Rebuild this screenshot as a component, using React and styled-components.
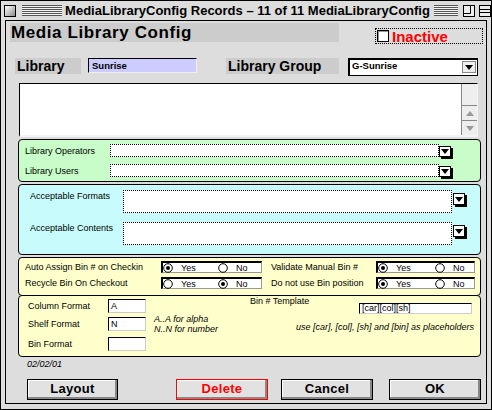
import React from 'react';
import styled, { createGlobalStyle } from 'styled-components';

const GlobalStyle = createGlobalStyle`
  html, body { margin: 0; padding: 0; background: #dddddd; }
  body { font-family: "Liberation Sans", Arial, sans-serif; color: #000; }
  * { box-sizing: border-box; }
`;

const Window = styled.div`
  width: 492px;
  height: 410px;
  border: 1px solid #000;
  background: #dddddd;
  display: flex;
  flex-direction: column;
`;

// title bar
const TitleBar = styled.div`
  height: 19px;
  flex-shrink: 0;
  display: flex;
  align-items: center;
`;
const CloseBox = styled.div`
  width: 12px;
  height: 12px;
  margin-left: 3px;
  border: 1px solid #000;
  background: linear-gradient(135deg, #ffffff 0%, #bbbbbb 60%, #888888 100%);
`;
const Stripes = styled.div`
  width: ${(p) => p.$w}px;
  height: 11px;
  margin-left: ${(p) => p.$ml}px;
  flex-shrink: 0;
  background: repeating-linear-gradient(to bottom, #555 0 1px, #f4f4f4 1px 2px);
`;
const TitleText = styled.div`
  flex: 1;
  margin: 0 4px 0 3px;
  text-align: center;
  white-space: nowrap;
  font-weight: bold;
  font-size: 13px;
  line-height: 19px;
`;
const WinBox = styled.svg`
  margin-left: ${(p) => p.$ml}px;
  flex-shrink: 0;
`;

const Body = styled.div`
  flex: 1;
  margin: 0 4px 5px 4px;
  border: 1px solid #000;
  display: flex;
  flex-direction: column;
`;

// header
const Header = styled.div`
  display: flex;
  align-items: flex-start;
  height: 21px;
  margin-top: 2px;
`;
const HeaderBand = styled.div`
  margin-left: 4px;
  width: 329px;
  height: 19px;
  background: #cccccc;
  padding-left: 1px;
  font-weight: bold;
  font-size: 17px;
  letter-spacing: 0.6px;
  line-height: 19px;
`;
const InactiveBox = styled.label`
  margin: 5px 3px 0 auto;
  width: 108px;
  height: 16px;
  border: 1px dotted #000;
  display: flex;
  align-items: center;
  padding-left: 1px;
  gap: 3px;
  color: #ff0000;
  font-weight: bold;
  font-size: 15px;
`;
const CheckBox = styled.span`
  width: 12px;
  height: 12px;
  background: #fff;
  border: 1px solid #000;
  box-shadow: inset 1px 1px 0 #999;
`;

// library row
const LibRow = styled.div`
  display: flex;
  align-items: flex-start;
  height: 18px;
  margin-top: 14px;
`;
const LabelBand = styled.div`
  margin-left: ${(p) => p.$ml}px;
  width: ${(p) => p.$w}px;
  height: 16px;
  background: #cccccc;
  padding-left: 2px;
  font-weight: bold;
  font-size: 14px;
  line-height: 16px;
  white-space: nowrap;
`;
const LibInput = styled.div`
  margin-left: 7px;
  width: 109px;
  height: 15px;
  background: #ccccff;
  border-top: 1px solid #000;
  border-left: 1px solid #000;
  border-right: 1px solid #eee;
  border-bottom: 1px solid #eee;
  padding-left: 3px;
  font-weight: bold;
  font-size: 9.5px;
  line-height: 13px;
`;
const Select = styled.div`
  margin-left: 9px;
  width: 130px;
  height: 18px;
  background: #fff;
  border: 1px solid #000;
  box-shadow: inset 1px 1px 0 #000;
  display: flex;
  align-items: center;
  padding: 0 1px 0 3px;
  font-weight: bold;
  font-size: 9.5px;
`;
const SelectText = styled.span`
  flex: 1;
  margin-top: -4px;
`;
const SelectArrow = styled.span`
  width: 14px;
  height: 12px;
  border: 1px solid #888;
  background: #eeeeee;
  display: flex;
  align-items: center;
  justify-content: center;
`;

// notes box
const NotesBox = styled.div`
  margin: 7px 0 0 13px;
  width: 459px;
  height: 54px;
  background: #fff;
  border-top: 1px solid #000;
  border-left: 1px solid #000;
  border-right: 1px solid #f4f4f4;
  border-bottom: 2px solid #f4f4f4;
  display: flex;
  justify-content: flex-end;
`;
const ScrollBar = styled.div`
  width: 16px;
  background: #eeeeee;
  border-left: 1px solid #888;
  display: flex;
  flex-direction: column;
`;
const ScrollTrack = styled.div`
  flex: 1;
`;
const ScrollArrow = styled.div`
  height: 15px;
  border-top: 1px solid #888;
  display: flex;
  align-items: center;
  justify-content: center;
`;

// coloured panels
const Panel = styled.div`
  margin: ${(p) => p.$mt}px 0 0 12px;
  width: 463px;
  height: ${(p) => p.$h}px;
  background: ${(p) => p.$bg};
  border: 1px solid #000;
  border-radius: 4px;
  padding: ${(p) => p.$pad};
  display: flex;
  flex-direction: ${(p) => p.$dir || 'column'};
`;
const FieldRow = styled.div`
  display: flex;
  align-items: ${(p) => p.$align || 'center'};
  height: ${(p) => p.$h}px;
  margin-top: ${(p) => p.$mt || 0}px;
`;
const Label = styled.span`
  width: ${(p) => p.$w}px;
  flex-shrink: 0;
  font-size: 9px;
  line-height: ${(p) => p.$lh || 10}px;
  white-space: nowrap;
  margin-left: ${(p) => p.$ml || 0}px;
`;
const DottedField = styled.div`
  width: 329px;
  height: ${(p) => p.$h}px;
  background: #fff;
  border: 1px dotted #000;
  flex-shrink: 0;
`;
const DropBtn = styled.span`
  width: 12px;
  height: ${(p) => p.$h}px;
  margin: ${(p) => p.$mt || 0}px 0 0 ${(p) => p.$ml || 0}px;
  background: #fff;
  border: 1px solid #000;
  box-shadow: 2px 2px 0 #000;
  display: flex;
  align-items: center;
  justify-content: center;
`;

// radios
const RadioBox = styled.div`
  width: ${(p) => p.$w}px;
  height: 12px;
  background: #fff;
  border-top: 2px solid #000;
  border-left: 2px solid #000;
  border-right: 1px solid #999;
  border-bottom: 1px solid #999;
  display: flex;
  align-items: center;
`;
const RadioOpt = styled.span`
  width: ${(p) => p.$w || 'auto'}px;
  display: flex;
  align-items: center;
  gap: 8px;
  font-size: 9px;
`;

// yellow lower panel
const LeftCol = styled.div`
  width: 231px;
  padding: 3px 0 0 9px;
  display: flex;
  flex-direction: column;
`;
const RightCol = styled.div`
  flex: 1;
  padding-right: 6px;
  display: flex;
  flex-direction: column;
`;
const SmallInput = styled.div`
  width: ${(p) => p.$w}px;
  height: ${(p) => p.$h}px;
  margin-top: ${(p) => p.$mt || 0}px;
  background: #fff;
  border-top: 1px solid #000;
  border-left: 1px solid #000;
  border-right: 1px solid #ccc;
  border-bottom: 1px solid #ccc;
  padding-left: 2px;
  font-size: 9px;
  line-height: ${(p) => p.$h - 2}px;
  flex-shrink: 0;
`;
const Hint = styled.div`
  margin-left: 8px;
  font-size: 9px;
  font-style: italic;
  line-height: 10px;
`;
const Placeholder = styled.div`
  margin-top: 8px;
  text-align: right;
  font-size: 9px;
  font-style: italic;
  line-height: 10px;
`;

const DateText = styled.div`
  margin: 2px 0 0 21px;
  font-size: 9px;
  font-style: italic;
  line-height: 10px;
`;

const ButtonRow = styled.div`
  display: flex;
  margin-top: 10px;
  height: 21px;
`;
const Button = styled.button`
  margin-left: ${(p) => p.$ml}px;
  width: ${(p) => p.$w}px;
  height: 21px;
  padding: 0 0 2px 0;
  background: #e2e2e2;
  border: 1px solid ${(p) => (p.$danger ? '#ff0000' : '#000')};
  box-shadow: inset -2px -2px 0 #888, inset 1px 1px 0 #fff;
  color: ${(p) => (p.$danger ? '#ff0000' : '#000')};
  font-family: "Liberation Sans", Arial, sans-serif;
  font-weight: bold;
  font-size: 13px;
  letter-spacing: 0.3px;
  border-radius: 0;
`;

const Tri = ({ fill = '#000', up }) => (
  <svg width="8" height="5" viewBox="0 0 8 5">
    <path d={up ? 'M0 5H8L4 0Z' : 'M0 0H8L4 5Z'} fill={fill} />
  </svg>
);

const Radio = ({ on }) => (
  <svg width="10" height="10" viewBox="0 0 10 10">
    <circle cx="5" cy="5" r="4.3" fill="#fff" stroke="#000" strokeWidth="1" />
    {on && <circle cx="5" cy="5" r="2" fill="#000" />}
  </svg>
);

const YesNo = ({ box, yesW, yes }) => (
  <RadioBox $w={box}>
    <RadioOpt $w={yesW}>
      <Radio on={yes} />
      Yes
    </RadioOpt>
    <RadioOpt>
      <Radio on={!yes} />
      No
    </RadioOpt>
  </RadioBox>
);

export default function App() {
  return (
    <>
      <GlobalStyle />
      <Window>
        <TitleBar>
          <CloseBox />
          <Stripes $w={40} $ml={6} />
          <TitleText>MediaLibraryConfig Records – 11 of 11 MediaLibraryConfig</TitleText>
          <Stripes $w={24} $ml={0} />
          <WinBox $ml={5} width="12" height="12" viewBox="0 0 12 12">
            <rect x="0.5" y="0.5" width="11" height="11" fill="#eee" stroke="#000" />
            <path d="M0.5 8.5H7.5V0.5" fill="none" stroke="#000" />
          </WinBox>
          <WinBox $ml={4} width="12" height="12" viewBox="0 0 12 12">
            <rect x="0.5" y="0.5" width="11" height="11" fill="#eee" stroke="#000" />
            <path d="M0.5 4.5H11.5M0.5 7.5H11.5" stroke="#000" />
          </WinBox>
        </TitleBar>

        <Body>
          <Header>
            <HeaderBand>Media Library Config</HeaderBand>
            <InactiveBox>
              <CheckBox />
              Inactive
            </InactiveBox>
          </Header>

          <LibRow>
            <LabelBand $ml={9} $w={66}>Library</LabelBand>
            <LibInput>Sunrise</LibInput>
            <LabelBand $ml={29} $w={113}>Library Group</LabelBand>
            <Select>
              <SelectText>G-Sunrise</SelectText>
              <SelectArrow>
                <Tri />
              </SelectArrow>
            </Select>
          </LibRow>

          <NotesBox>
            <ScrollBar>
              <ScrollTrack />
              <ScrollArrow>
                <Tri up fill="#999" />
              </ScrollArrow>
              <ScrollArrow>
                <Tri fill="#999" />
              </ScrollArrow>
            </ScrollBar>
          </NotesBox>

          <Panel $mt={2} $h={43} $bg="#c8fcc8" $pad="4px 0 0 6px">
            <FieldRow $h={13}>
              <Label $w={85}>Library Operators</Label>
              <DottedField $h={13} />
              <DropBtn $h={11} $mt={1}>
                <Tri />
              </DropBtn>
            </FieldRow>
            <FieldRow $h={13} $mt={7}>
              <Label $w={85}>Library Users</Label>
              <DottedField $h={13} />
              <DropBtn $h={11} $mt={1}>
                <Tri />
              </DropBtn>
            </FieldRow>
          </Panel>

          <Panel $mt={2} $h={71} $bg="#c8fcfc" $pad="5px 0 0 11px">
            <FieldRow $h={23} $align="flex-start">
              <Label $w={93} $lh={12}>Acceptable Formats</Label>
              <DottedField $h={23} />
              <DropBtn $h={12} $mt={3} $ml={1}>
                <Tri />
              </DropBtn>
            </FieldRow>
            <FieldRow $h={23} $mt={9} $align="flex-start">
              <Label $w={93} $lh={12}>Acceptable Contents</Label>
              <DottedField $h={23} />
              <DropBtn $h={12} $mt={3} $ml={1}>
                <Tri />
              </DropBtn>
            </FieldRow>
          </Panel>

          <Panel $mt={2} $h={39} $bg="#ffffcc" $pad="3px 0 0 6px">
            <FieldRow $h={12}>
              <Label $w={136}>Auto Assign Bin # on Checkin</Label>
              <YesNo box={101} yesW={55} yes />
              <Label $w={105} $ml={9}>Validate Manual Bin #</Label>
              <YesNo box={99} yesW={57} yes />
            </FieldRow>
            <FieldRow $h={12} $mt={4}>
              <Label $w={136}>Recycle Bin On Checkout</Label>
              <YesNo box={101} yesW={55} yes={false} />
              <Label $w={105} $ml={9}>Do not use Bin position</Label>
              <YesNo box={99} yesW={57} yes />
            </FieldRow>
          </Panel>

          <Panel $mt={-1} $h={62} $bg="#ffffcc" $pad="0" $dir="row">
            <LeftCol>
              <FieldRow $h={14}>
                <Label $w={80}>Column Format</Label>
                <SmallInput $w={38} $h={14}>A</SmallInput>
              </FieldRow>
              <FieldRow $h={14} $mt={4}>
                <Label $w={80}>Shelf Format</Label>
                <SmallInput $w={38} $h={14}>N</SmallInput>
                <Hint>
                  A..A for alpha
                  <br />
                  N..N for number
                </Hint>
              </FieldRow>
              <FieldRow $h={14} $mt={6}>
                <Label $w={80}>Bin Format</Label>
                <SmallInput $w={38} $h={14} />
              </FieldRow>
            </LeftCol>
            <RightCol>
              <FieldRow $h={18} $align="flex-start">
                <Label $w={109}>Bin # Template</Label>
                <SmallInput $w={113} $h={11} $mt={7}>[car][col][sh]</SmallInput>
              </FieldRow>
              <Placeholder>use [car], [col], [sh] and [bin] as placeholders</Placeholder>
            </RightCol>
          </Panel>

          <DateText>02/02/01</DateText>

          <ButtonRow>
            <Button $ml={21} $w={91}>Layout</Button>
            <Button $ml={58} $w={92} $danger>Delete</Button>
            <Button $ml={13} $w={92}>Cancel</Button>
            <Button $ml={16} $w={92}>OK</Button>
          </ButtonRow>
        </Body>
      </Window>
    </>
  );
}
